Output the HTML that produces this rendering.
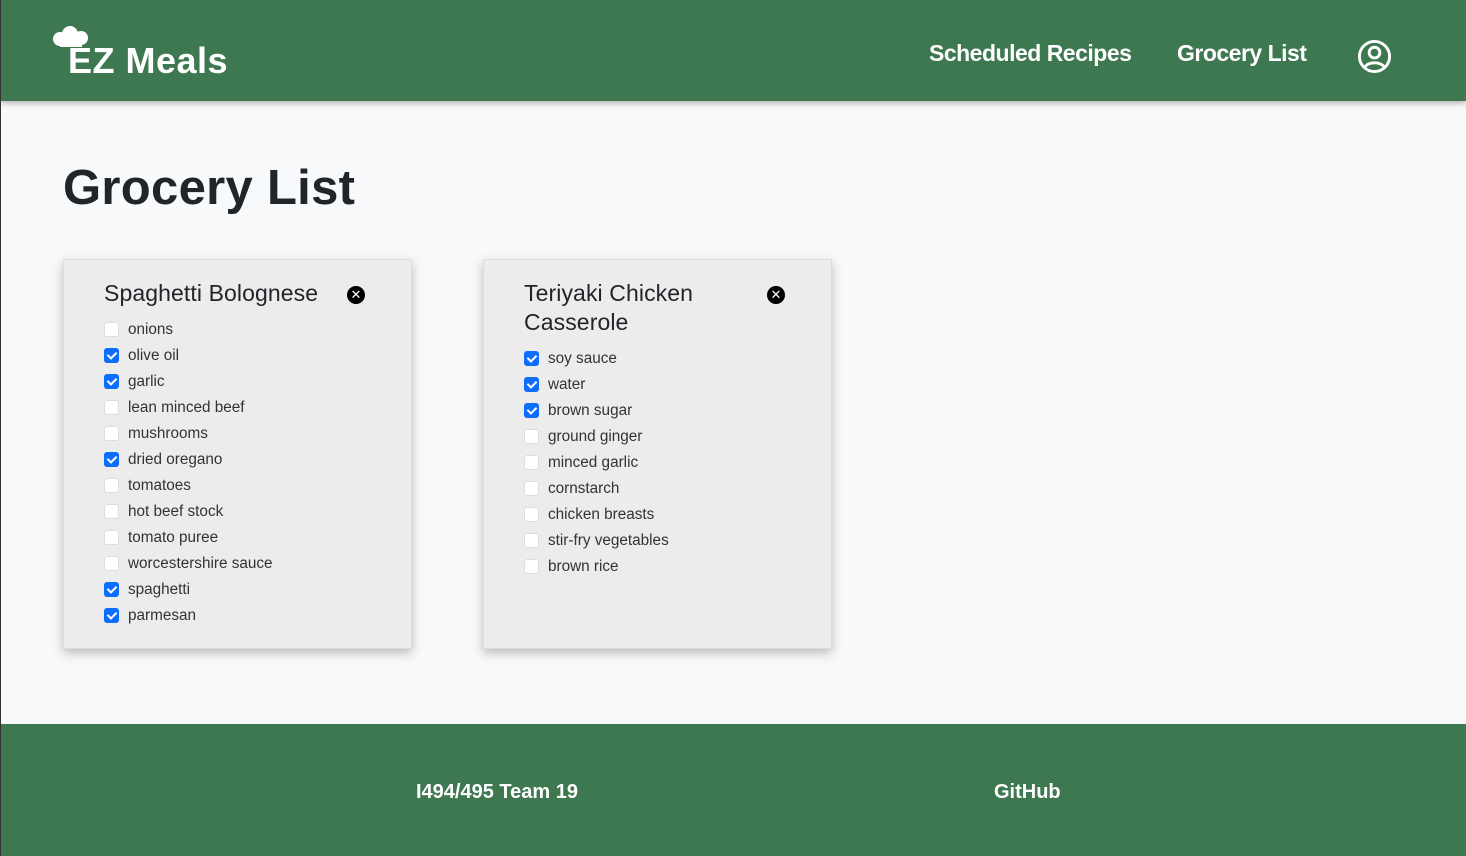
<!DOCTYPE html>
<html><head><style>
body{margin:0;width:1466px;height:856px;background:#f8f9fa;font-family:"Liberation Sans",sans-serif;position:relative;overflow:hidden}
header{position:absolute;left:0;top:0;width:1466px;height:101px;background:#3e7851;box-shadow:0 2px 6px rgba(0,0,0,.3)}
.logo{position:absolute;left:68px;top:40px;color:#fff;font-weight:bold;font-size:36px;letter-spacing:0.5px}
.nav{position:absolute;top:40px;color:#fff;font-weight:bold;font-size:23px;letter-spacing:-0.5px}
h1{position:absolute;left:63px;top:160px;margin:0;font-size:49px;font-weight:bold;color:#212529;letter-spacing:0.3px}
.card{position:absolute;top:259px;width:349px;height:390px;background:#ececec;box-shadow:0 4px 10px rgba(0,0,0,.25);border:1px solid #ddd;box-sizing:border-box}
.t{position:absolute;left:40px;top:19px;font-size:23px;color:#212529;line-height:29px;width:240px;letter-spacing:0.1px}
.x{position:absolute;left:283px;top:26px;width:18px;height:18px;border-radius:50%;background:#000;color:#fff;font-size:13px;text-align:center;line-height:18px}
.items{position:absolute;left:40px;font-size:15.3px;color:#333}
.it{height:26px;line-height:26px;position:relative;padding-left:24px}
.cb{position:absolute;left:0;top:5px;width:15px;height:15px;border-radius:3px;background:#fff;border:1px solid #ddd;box-sizing:border-box}
.cb.on{background:#0d6efd;border-color:#0d6efd}
.cb.on:after{content:"";position:absolute;left:4px;top:1px;width:4px;height:7px;border:solid #fff;border-width:0 2px 2px 0;transform:rotate(45deg)}
footer{position:absolute;left:0;top:724px;width:1466px;height:132px;background:#3e7851;color:#fff;font-weight:bold;font-size:20px}
</style></head><body>
<header>
<svg style="position:absolute;left:52px;top:25px" width="38" height="26" viewBox="0 0 38 26"><circle cx="8" cy="14" r="7" fill="#fff"/><circle cx="18" cy="9" r="8" fill="#fff"/><circle cx="29" cy="13" r="7" fill="#fff"/><rect x="8" y="14" width="22" height="8" fill="#fff"/></svg>
<div class="logo">EZ Meals</div>
<div class="nav" style="left:929px">Scheduled Recipes</div>
<div class="nav" style="left:1177px">Grocery List</div>
<svg style="position:absolute;left:1357px;top:39px" width="35" height="35" viewBox="0 0 36 36"><circle cx="18" cy="18" r="15.5" fill="none" stroke="#fff" stroke-width="3"/><circle cx="18" cy="14" r="5.5" fill="none" stroke="#fff" stroke-width="3"/><path d="M8 29c3-6 17-6 20 0" fill="none" stroke="#fff" stroke-width="3"/></svg>
</header>
<h1>Grocery List</h1>
<div class="card" style="left:63px">
<div class="t">Spaghetti Bolognese</div><div class="x">✕</div>
<div class="items" style="top:57px">
<div class="it"><span class="cb"></span>onions</div>
<div class="it"><span class="cb on"></span>olive oil</div>
<div class="it"><span class="cb on"></span>garlic</div>
<div class="it"><span class="cb"></span>lean minced beef</div>
<div class="it"><span class="cb"></span>mushrooms</div>
<div class="it"><span class="cb on"></span>dried oregano</div>
<div class="it"><span class="cb"></span>tomatoes</div>
<div class="it"><span class="cb"></span>hot beef stock</div>
<div class="it"><span class="cb"></span>tomato puree</div>
<div class="it"><span class="cb"></span>worcestershire sauce</div>
<div class="it"><span class="cb on"></span>spaghetti</div>
<div class="it"><span class="cb on"></span>parmesan</div>
</div></div>
<div class="card" style="left:483px">
<div class="t">Teriyaki Chicken Casserole</div><div class="x">✕</div>
<div class="items" style="top:86px">
<div class="it"><span class="cb on"></span>soy sauce</div>
<div class="it"><span class="cb on"></span>water</div>
<div class="it"><span class="cb on"></span>brown sugar</div>
<div class="it"><span class="cb"></span>ground ginger</div>
<div class="it"><span class="cb"></span>minced garlic</div>
<div class="it"><span class="cb"></span>cornstarch</div>
<div class="it"><span class="cb"></span>chicken breasts</div>
<div class="it"><span class="cb"></span>stir-fry vegetables</div>
<div class="it"><span class="cb"></span>brown rice</div>
</div></div>
<footer>
<div style="position:absolute;left:416px;top:57px">I494/495 Team 19</div>
<div style="position:absolute;left:994px;top:57px">GitHub</div>
</footer>
<div style="position:absolute;left:0;top:0;width:1px;height:856px;background:#333"></div>
</body></html>
